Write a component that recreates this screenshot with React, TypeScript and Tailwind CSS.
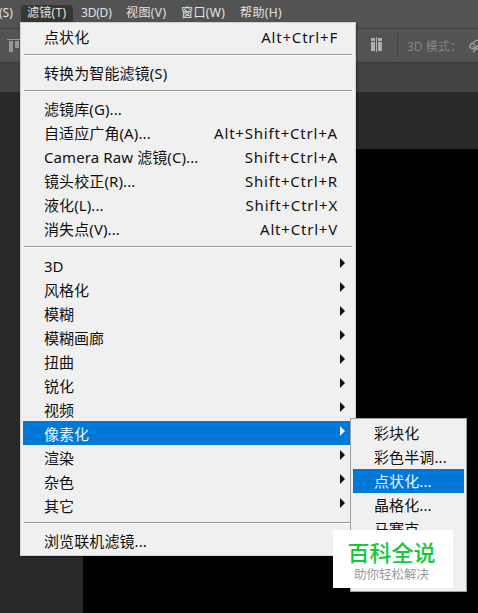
type MenuItem = {
  label: string;
  shortcut?: string;
  arrow?: boolean;
  active?: boolean;
};

const groups: MenuItem[][] = [
  [{ label: '点状化', shortcut: 'Alt+Ctrl+F' }],
  [{ label: '转换为智能滤镜(S)' }],
  [
    { label: '滤镜库(G)...' },
    { label: '自适应广角(A)...', shortcut: 'Alt+Shift+Ctrl+A' },
    { label: 'Camera Raw 滤镜(C)...', shortcut: 'Shift+Ctrl+A' },
    { label: '镜头校正(R)...', shortcut: 'Shift+Ctrl+R' },
    { label: '液化(L)...', shortcut: 'Shift+Ctrl+X' },
    { label: '消失点(V)...', shortcut: 'Alt+Ctrl+V' },
  ],
  [
    { label: '3D', arrow: true },
    { label: '风格化', arrow: true },
    { label: '模糊', arrow: true },
    { label: '模糊画廊', arrow: true },
    { label: '扭曲', arrow: true },
    { label: '锐化', arrow: true },
    { label: '视频', arrow: true },
    { label: '像素化', arrow: true, active: true },
    { label: '渲染', arrow: true },
    { label: '杂色', arrow: true },
    { label: '其它', arrow: true },
  ],
  [{ label: '浏览联机滤镜...' }],
];

const submenu: MenuItem[] = [
  { label: '彩块化' },
  { label: '彩色半调...' },
  { label: '点状化...', active: true },
  { label: '晶格化...' },
  { label: '马赛克' },
];

const Row = ({ item }: { item: MenuItem }) => (
  <div
    className={`flex h-6 items-center justify-between pl-[21px] whitespace-nowrap ${
      item.active ? 'bg-[#0078d7] text-[#e8f6ff]' : 'text-[#111]'
    }`}
  >
    <span className={item.arrow ? 'pt-[2px]' : 'tracking-[0.1px]'}>{item.label}</span>
    {item.shortcut && (
      <span className="pr-[15px] tracking-[0.8px]">{item.shortcut}</span>
    )}
    {item.arrow && (
      <svg width="5" height="10" viewBox="0 0 5 10" className="mr-[8px] mb-[5px]">
        <path d="M0 0L5 5L0 10Z" fill="currentColor" />
      </svg>
    )}
  </div>
);

const FilterMenu = () => (
  <div className="absolute top-[22px] left-[20px] h-[534px] w-[336px] border border-[#d2d2d2] bg-[#f0f0f0] px-[2px] pt-[2px] shadow-[1px_1px_2px_#0006]">
    {groups.map((group, i) => (
      <div key={i}>
        {i > 0 && (
          <div className="h-3 pt-[5px]">
            <div className="mr-[1px] ml-[1px] h-[2px] border-t border-[#979797] bg-white" />
          </div>
        )}
        {group.map((item) => (
          <Row key={item.label} item={item} />
        ))}
      </div>
    ))}
  </div>
);

const Submenu = () => (
  <div className="absolute top-[418px] left-[350px] h-[174px] w-[117px] border border-[#a0a0a0] bg-[#f0f0f0] p-[2px]">
    {submenu.map((item) => (
      <Row key={item.label} item={item} />
    ))}
  </div>
);

const App = () => {
  return (
    <div className="relative flex h-[613px] w-[478px] flex-col overflow-hidden bg-[#282828] font-['Noto_Sans','Noto_Sans_CJK_SC',sans-serif] text-[15px] leading-none">
      {/* Menu bar */}
      <div className="flex h-7 shrink-0 items-start bg-[#535353] pt-[5px] text-[12px] whitespace-nowrap text-[#e2e2e2]">
        <span className="-ml-px w-[22px] pt-[2px]">(S)</span>
        <span className="h-[18px] w-[52px] rounded-t-sm bg-[#363636] pt-[2px] pl-[6px] tracking-[0.3px]">滤镜(T)</span>
        <span className="ml-2 w-[45px] pt-[2px] tracking-[-0.2px]">3D(D)</span>
        <span className="w-[55px] pt-[2px] tracking-[0.4px]">视图(V)</span>
        <span className="w-[59px] pt-[2px] tracking-[0.4px]">窗口(W)</span>
        <span className="pt-[2px] tracking-[0.4px]">帮助(H)</span>
      </div>

      {/* Options bar */}
      <div className="flex h-[34px] shrink-0 items-center border-t border-[#3e3e3e] bg-[#535353]">
        <svg width="20" height="16" viewBox="0 0 20 16" className="ml-[7px] shrink-0" fill="#969696">
          <path d="M0 1h20v1H0zM2 3h4v11H2zM8 3h4v7H8z" />
        </svg>
        <svg width="11" height="15" viewBox="0 0 11 15" className="mb-[2px] ml-[344px] shrink-0" fill="#b0b0b0">
          <path d="M0 1h4v3H0zM0 5h4v9H0zM7 1h4v3H7zM7 5h4v9H7zM5 0h1v15H5z" />
        </svg>
        <div className="mb-[2px] ml-[15px] h-6 w-px shrink-0 bg-[#404040]" />
        <span className="ml-[9px] w-[62px] shrink-0 pt-[2px] text-[12px] whitespace-nowrap text-[#858585]">3D 模式：</span>
        <svg width="16" height="16" viewBox="0 0 16 16" className="shrink-0" fill="none" stroke="#999" strokeWidth="1.5">
          <path d="M5 7C4 1 11 1 12 6M4 5C-1 7 0 11 6 11M4 8l3 3-3 3M7 8h6v3H8z" />
        </svg>
      </div>
      <div className="h-[30px] shrink-0 border-t border-[#393939] bg-[#424242]" />

      {/* Canvas */}
      <div className="flex grow pt-[57px] pl-[83px]">
        <div className="grow bg-black" />
      </div>

      <FilterMenu />
      <Submenu />

      <div className="absolute top-[530px] left-[333px] flex h-[58px] w-[120px] flex-col items-center bg-white">
        <span className="mt-[10px] h-[24px] pr-[3px] text-[22px] leading-[24px] font-medium text-[#12c83c]">百科全说</span>
        <span className="mt-[4px] h-[14px] pr-[3px] text-[12.5px] leading-[14px] text-[#999]">助你轻松解决</span>
      </div>
    </div>
  );
};

export default App;
